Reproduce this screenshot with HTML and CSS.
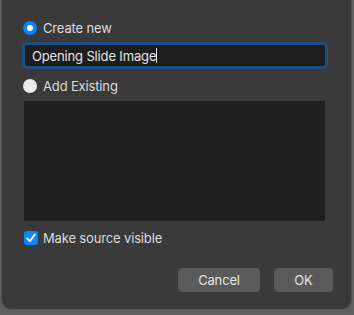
FILE: index.html
```html
<!DOCTYPE html>
<html lang="en">

<head>
    <meta charset="UTF-8">
    <title>New Source</title>
    <link rel="stylesheet" href="styles.css">
</head>

<body>
    <div class="dialog">
        <label class="option">
            <span class="radio checked"></span>
            <span>Create new</span>
        </label>
        <div class="name-field">
            <span>Opening Slide Image</span><span class="caret"></span>
        </div>

        <label class="option existing">
            <span class="radio"></span>
            <span>Add Existing</span>
        </label>
        <div class="source-list"></div>

        <label class="option visible">
            <span class="checkbox">
                <svg width="14" height="14" viewBox="0 0 14 14">
                    <path d="M3.2 7.4 L5.8 10.2 L10.8 3.6" fill="none" stroke="#fff" stroke-width="1.9" stroke-linecap="round" stroke-linejoin="round" />
                </svg>
            </span>
            <span>Make source visible</span>
        </label>

        <div class="buttons">
            <button class="btn cancel">Cancel</button>
            <button class="btn ok">OK</button>
        </div>
    </div>
</body>

</html>
```

FILE: styles.css
```css
* {
    margin: 0;
    padding: 0;
    box-sizing: border-box;
    font-family: 'Inter', 'Liberation Sans', sans-serif;
}

body {
    background-color: #5f5f5f;
    width: 354px;
    height: 315px;
    overflow: hidden;
}

.dialog {
    margin-left: 1px;
    width: 351px;
    height: 310px;
    background-color: #3a3a3a;
    border: 1px solid #555;
    border-top: none;
    border-radius: 0 0 10px 10px;
    padding: 19px 18px 0 20px;
    color: #dcdcdc;
    font-size: 13px;
    letter-spacing: -0.15px;
}

.option {
    display: flex;
    align-items: center;
    gap: 6px;
    height: 18px;
    margin-left: 1px;
}

.radio {
    width: 14px;
    height: 14px;
    border-radius: 50%;
    background-color: #ececec;
    display: flex;
    align-items: center;
    justify-content: center;
}

.radio.checked {
    background-color: #0a84ff;
}

.radio.checked::after {
    content: '';
    width: 6px;
    height: 6px;
    border-radius: 50%;
    background-color: #fff;
}

.name-field {
    margin: 8px 0 0 3px;
    width: 300px;
    height: 21px;
    background-color: #1e1e1e;
    border-radius: 2px;
    box-shadow: 0 0 0 3px #1d4f87;
    padding-left: 7px;
    display: flex;
    align-items: center;
    color: #e4e4e4;
}

.caret {
    width: 1px;
    height: 15px;
    background-color: #e4e4e4;
}

.existing {
    margin-top: 11px;
}

.source-list {
    margin: 6px 0 0 2px;
    width: 301px;
    height: 120px;
    background-color: #1f1f1f;
}

.visible {
    margin-top: 8px;
    margin-left: 2px;
    gap: 5px;
}

.checkbox {
    width: 14px;
    height: 14px;
    border-radius: 3px;
    background-color: #0a84ff;
    display: flex;
}

.buttons {
    display: flex;
    justify-content: flex-end;
    gap: 14px;
    margin-top: 21px;
}

.btn {
    height: 24px;
    border: none;
    border-radius: 4px;
    background-color: #5a5a5a;
    color: #e2e2e2;
    font-size: 13px;
    letter-spacing: -0.15px;
}

.cancel {
    width: 82px;
}

.ok {
    width: 59px;
}
```
